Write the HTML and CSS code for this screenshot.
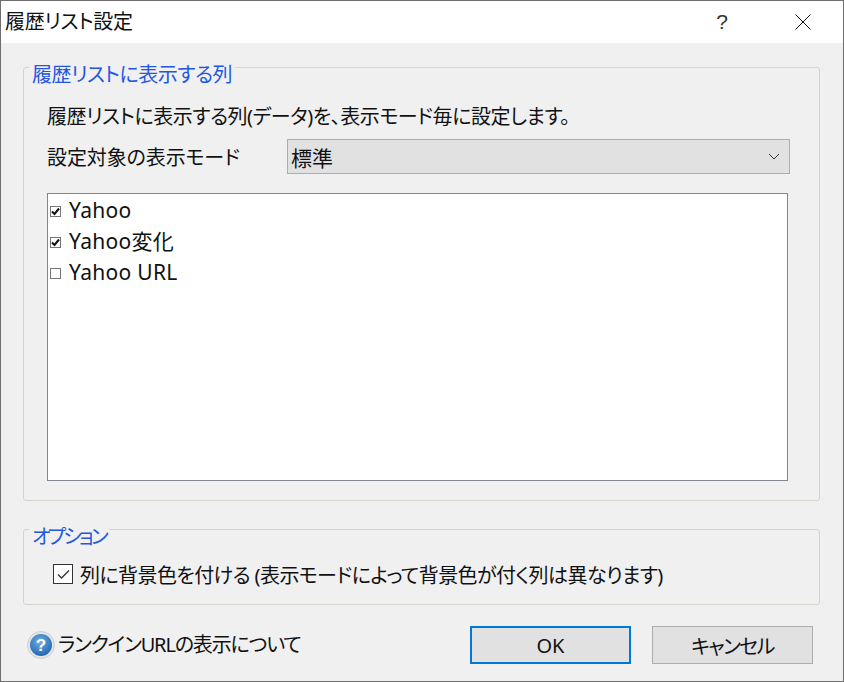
FILE: index.html
```html
<!DOCTYPE html>
<html lang="ja">
<head>
<meta charset="utf-8">
<title>履歴リスト設定</title>
<link rel="stylesheet" href="styles.css">
</head>
<body>
<div class="window">
  <header class="titlebar">
    <span class="title">履歴リスト設定</span>
    <span class="help">?</span>
    <svg class="close" width="16" height="16" viewBox="0 0 16 16"><path d="M.5.5l15 15M15.500.5l-15 15" stroke="#111" stroke-width="1" fill="none"/></svg>
  </header>
  <main class="content">
    <section class="group group-list">
      <div class="legend legend-list">履歴リストに表示する列</div>
      <p class="desc">履歴リストに表示する列(データ)を、表示モード毎に設定します。</p>
      <div class="mode-row">
        <span class="mode-label">設定対象の表示モード</span>
        <div class="select"><span>標準</span>
          <svg width="12" height="7" viewBox="0 0 12 7"><path d="M1 1l5 5 5-5" stroke="#333" stroke-width="1" fill="none"/></svg>
        </div>
      </div>
      <ul class="list">
        <li class="list-item"><span class="mini-check"><svg width="9" height="9" viewBox="0 0 9 9"><path d="M1 4.500l2.500 2.500L8 1.500" stroke="#111" stroke-width="2" fill="none"/></svg></span>Yahoo</li>
        <li class="list-item"><span class="mini-check"><svg width="9" height="9" viewBox="0 0 9 9"><path d="M1 4.500l2.500 2.500L8 1.500" stroke="#111" stroke-width="2" fill="none"/></svg></span>Yahoo変化</li>
        <li class="list-item"><span class="mini-check"></span>Yahoo URL</li>
      </ul>
    </section>
    <section class="group group-opt">
      <div class="legend legend-opt">オプション</div>
      <div class="opt-row">
        <span class="check"><svg width="15" height="15" viewBox="0 0 15 15"><path d="M2 7.500l3.500 3.500L13 3.500" stroke="#333" stroke-width="1.300" fill="none"/></svg></span>
        <span class="opt-text">列に背景色を付ける (表示モードによって背景色が付く列は異なります)</span>
      </div>
    </section>
    <footer class="footer">
      <div class="info">
        <svg class="info-icon" width="28" height="28" viewBox="0 0 28 28">
          <defs><radialGradient id="g" cx="45%" cy="35%" r="70%"><stop offset="0" stop-color="#6fb0e6"/><stop offset="1" stop-color="#1c62ae"/></radialGradient></defs>
          <circle cx="14" cy="14" r="13.500" fill="#e4e4e4" stroke="#cfcfcf"/>
          <circle cx="14" cy="14" r="11" fill="url(#g)"/>
          <text x="14" y="20" text-anchor="middle" class="info-q">?</text>
        </svg>
        <span class="info-text">ランクインURLの表示について</span>
      </div>
      <button class="btn btn-ok">OK</button>
      <button class="btn btn-cancel">キャンセル</button>
    </footer>
  </main>
</div>
</body>
</html>
```

FILE: styles.css
```css
* { box-sizing: border-box; }
html, body { margin: 0; padding: 0; }
body {
  width: 844px;
  height: 682px;
  overflow: hidden;
  font-family: "Noto Sans", "Noto Sans CJK JP", sans-serif;
  font-size: 20px;
  font-feature-settings: "palt";
  color: #111;
}
.window {
  width: 844px;
  height: 682px;
  display: flex;
  flex-direction: column;
  background: #f0f0f0;
  border: 1px solid #6e6e6e;
}
.titlebar {
  height: 42px;
  flex: none;
  background: #fff;
  display: flex;
  align-items: center;
  padding-left: 4px;
}
.title { flex: 1; line-height: 42px; letter-spacing: -0.3px; }
.help { font-size: 21px; color: #333; width: 16px; margin-right: 65px; text-align: center; font-family: "Liberation Sans", sans-serif; }
.close { margin-right: 32px; }
.content {
  flex: 1;
  display: flex;
  flex-direction: column;
  padding: 24px 23px 0 22px;
}
.group {
  border: 1px solid #d4d4c8;
  border-radius: 3px;
  position: relative;
  flex: none;
}
.group-list { height: 434px; padding: 0 31px 0 23px; }
.group-opt { height: 76px; margin-top: 28px; padding: 0 0 0 29px; }
.legend {
  position: absolute;
  left: 5px;
  top: -5px;
  padding: 0 3px;
  height: 24px;
  line-height: 24px;
  background: #f0f0f0;
  color: #2457e0;
}
.legend-list { letter-spacing: -0.45px; }
.legend-opt { letter-spacing: -2.8px; }
.desc { margin: 36px 0 0; line-height: 26px; letter-spacing: -0.45px; }
.mode-row { display: flex; align-items: center; margin-top: 9px; height: 35px; }
.mode-label { flex: none; width: 240px; letter-spacing: -0.1px; }
.select {
  flex: none;
  width: 503px;
  height: 35px;
  background: #e1e1e1;
  border: 1px solid #adadad;
  display: flex;
  align-items: center;
  justify-content: space-between;
  padding: 0 9px 0 3px;
  font-size: 21px;
}
.list {
  list-style: none;
  margin: 19px 0 0;
  padding: 1px 0 0;
  width: 741px;
  height: 288px;
  background: #fff;
  border: 1px solid #82878f;
}
.list-item {
  height: 31px;
  line-height: 31px;
  display: flex;
  align-items: center;
  font-size: 21px;
  letter-spacing: 0.3px;
  padding-left: 2px;
}
.mini-check {
  width: 11px;
  height: 11px;
  border: 1px solid #777;
  background: #fff;
  margin-right: 8px;
  display: flex;
  flex: none;
  position: relative;
  top: 1px;
}
.opt-row { display: flex; align-items: center; height: 30px; margin-top: 29px; }
.opt-text { letter-spacing: -0.58px; }
.check {
  width: 20px;
  height: 20px;
  border: 1px solid #333;
  margin-right: 7px;
  display: flex;
  align-items: center;
  justify-content: center;
  background: #fff;
  flex: none;
}
.footer { display: flex; align-items: center; margin-top: 21px; height: 38px; padding-left: 4px; }
.info { flex: 1; display: flex; align-items: center; }
.info-text { letter-spacing: -1.15px; line-height: 26px; }
.info-icon { margin-right: 3px; }
.info-q { font: bold 17px "Liberation Sans", sans-serif; fill: #fff; }
.btn {
  width: 161px;
  height: 38px;
  background: #e1e1e1;
  font-family: inherit;
  font-size: 20px;
  font-feature-settings: "palt";
  color: #111;
  padding: 0;
}
.btn-ok { border: 2px solid #0078d7; margin-right: 21px; }
.btn-cancel { border: 1px solid #adadad; margin-right: 7px; letter-spacing: -1.6px; }
```
